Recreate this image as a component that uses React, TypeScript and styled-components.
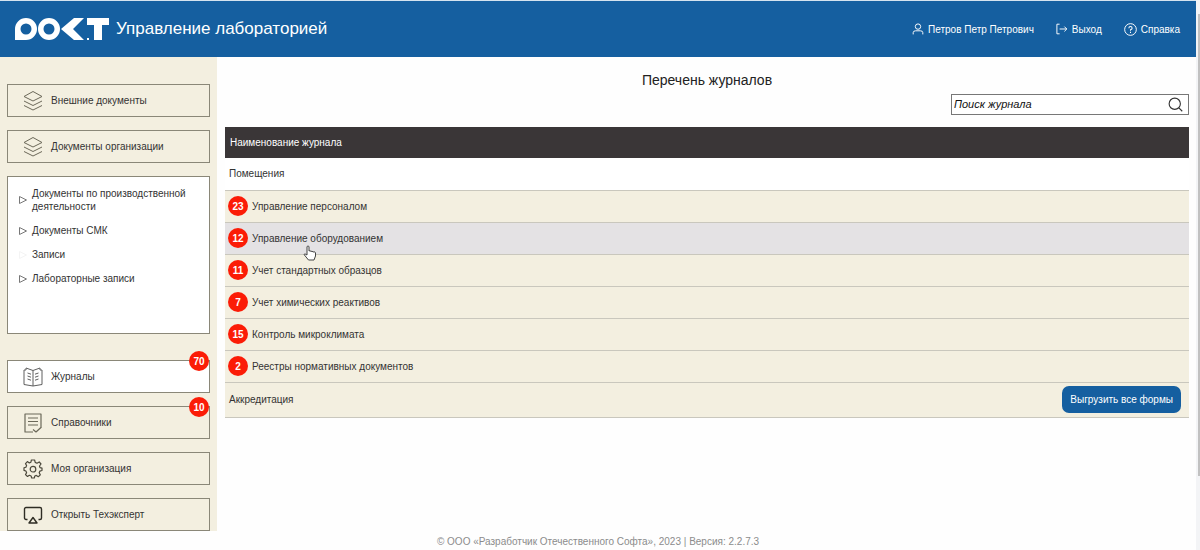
import React from "react";
import styled, { createGlobalStyle } from "styled-components";

const GlobalStyle = createGlobalStyle`
  *, *::before, *::after { box-sizing: border-box; }
  body {
    margin: 0;
    background: #fefefe;
    color: #333;
    font-family: "Liberation Sans", Arial, sans-serif;
    font-size: 10px;
    line-height: 13px;
  }
  button, input { font: inherit; color: inherit; }
  a { color: inherit; text-decoration: none; }
`;

const Page = styled.div`
  display: flex;
  min-height: 100vh;
`;

const Content = styled.div`
  flex: 1;
  min-width: 0;
  display: flex;
  flex-direction: column;
`;

const ScrollTrack = styled.div`
  width: 4px;
  padding: 14px 0 0 2px;
  background: #f3f4f6;
`;

const ScrollThumb = styled.div`
  height: 84vh;
  background: #c1c1c1;
`;

const Header = styled.header`
  display: flex;
  align-items: center;
  height: 57px;
  padding: 0 16px 0 14px;
  border-top: 1px solid #d5e3ef;
  background: #155fa0;
  color: #fff;
`;

const Brand = styled.a`
  display: flex;
  align-items: center;
  gap: 6px;
`;

const BrandName = styled.span`
  font-size: 17px;
  line-height: 20px;
`;

const UserNav = styled.nav`
  display: flex;
  gap: 22px;
  margin-left: auto;
`;

const UserLink = styled.a`
  display: flex;
  align-items: center;
  gap: 4px;
`;

const Columns = styled.div`
  display: flex;
  align-items: flex-start;
`;

const Sidebar = styled.aside`
  display: flex;
  flex-direction: column;
  gap: 26px;
  width: 217px;
  padding: 27px 7px 0;
  background: #f3efe0;
`;

const MenuGroup = styled.div`
  display: flex;
  flex-direction: column;
  gap: 13px;
`;

const MenuButton = styled.button<{ $active?: boolean }>`
  position: relative;
  display: flex;
  align-items: center;
  gap: 8px;
  height: 33px;
  padding: 0 15px;
  border: 1px solid #8a8778;
  background: ${(p) => (p.$active ? "#fff" : "transparent")};
  text-align: left;
`;

const Badge = styled.span`
  display: inline-flex;
  flex: none;
  align-items: center;
  justify-content: center;
  width: 20px;
  height: 20px;
  border-radius: 50%;
  background: #fb1c07;
  color: #fff;
  font-weight: bold;
`;

const CornerBadge = styled(Badge)`
  position: absolute;
  top: -10px;
  right: 0;
`;

const Tree = styled.ul`
  display: flex;
  flex-direction: column;
  gap: 11px;
  min-height: 158px;
  margin: 0;
  padding: 10px;
  border: 1px solid #8a8778;
  background: #fff;
  list-style: none;
`;

const TreeLink = styled.a`
  display: flex;
  align-items: center;
  gap: 4px;
`;

const TreeMark = styled.svg`
  flex: none;
`;

const Main = styled.main`
  flex: 1;
  min-width: 0;
  display: flex;
  flex-direction: column;
  padding: 13px 7px 0 8px;
`;

const Title = styled.h1`
  margin: 0;
  color: #222;
  font-size: 14px;
  font-weight: normal;
  line-height: 20px;
  text-align: center;
`;

const Search = styled.label`
  display: flex;
  align-items: center;
  align-self: flex-end;
  width: 238px;
  height: 21px;
  margin: 4px 0 12px;
  padding: 0 5px 0 2px;
  border: 1px solid #777;
  background: #fff;
`;

const SearchInput = styled.input`
  flex: 1;
  min-width: 0;
  padding: 0;
  border: 0;
  outline: 0;
  background: none;
  font-size: 11px;
  font-style: italic;
  &::placeholder { color: #111; opacity: 1; }
`;

const Table = styled.table`
  width: 100%;
  border-collapse: collapse;
`;

const HeadCell = styled.th`
  height: 31px;
  padding: 0 5px;
  background: #3a3637;
  color: #fff;
  font-weight: normal;
  text-align: left;
`;

const rowColors = { plain: "#fff", beige: "#f3efe0", hover: "#e4e2e4" };

const Row = styled.tr<{ $tone: keyof typeof rowColors }>`
  background: ${(p) => rowColors[p.$tone]};
`;

const Cell = styled.td<{ $tall?: boolean }>`
  height: ${(p) => (p.$tall ? 35 : 32)}px;
  padding: 0 8px 0 3px;
  border-bottom: 1px solid #c9c7bd;
`;

const CellBody = styled.div<{ $inset?: boolean }>`
  display: flex;
  align-items: center;
  gap: 4px;
  padding-left: ${(p) => (p.$inset ? 1 : 0)}px;
`;

const ExportButton = styled.button`
  height: 27px;
  margin-left: auto;
  padding: 0 8px;
  border: 0;
  border-radius: 7px;
  background: #155fa0;
  color: #fff;
`;

const Footer = styled.footer`
  margin-top: auto;
  padding-bottom: 2px;
  color: #8c8c8c;
  text-align: center;
`;

const Pointer = styled.svg`
  position: absolute;
  left: 303px;
  top: 245px;
  pointer-events: none;
`;

const Icon = ({ size = 20, children, color = "currentColor" }: { size?: number; color?: string; children: React.ReactNode }) => (
  <svg width={size} height={size} viewBox="0 0 20 20" fill="none" stroke={color} strokeWidth="1" strokeLinejoin="round" aria-hidden="true">
    {children}
  </svg>
);

const Logo = () => (
  <svg width="96" height="24" viewBox="0 0 96 24" aria-label="РОКТ">
    <path fill="#fff" fillRule="evenodd" d="M1 23V12A11 11 0 1 1 12 23ZM12 6.5a5.5 5.5 0 1 0 0 11a5.5 5.5 0 1 0 0-11Z" />
    <path fill="#fff" fillRule="evenodd" d="M35 1a11 11 0 1 1 0 22a11 11 0 1 1 0-22ZM35 6.500a5.500 5.500 0 1 0 0 11a5.500 5.500 0 1 0 0-11Z" />
    <path fill="#fff" d="M60 1H70L59 12L70 23H60L47 12Z" />
    <path fill="#fff" d="M73 21h2v2h-2ZM73 1H95V8H88V23H80V8H73Z" />
  </svg>
);

const LayersIcon = () => (
  <Icon color="#6b6859">
    <path d="M10 0.500L19 5.500L10 10L1 5.500ZM1 10L10 14.500L19 10M1 14.500L10 19L19 14.500" />
  </Icon>
);

const BookIcon = () => (
  <Icon color="#5f5f5f">
    <path d="M10 3.500L3 1V3H1V17.500L10 19L19 17.500V3H17V1L10 3.500V19M4.500 6L8 7.200M4.500 9L8 10.200M4.500 12L8 13.200M15.500 6L12 7.200M15.500 9L12 10.200M15.500 12L12 13.200" />
  </Icon>
);

const ListIcon = () => (
  <Icon color="#6b6859">
    <path strokeWidth="1.200" d="M10 19H2V1H18V14M5 5H15M5 8.500H15M5 12H15M10 16.500L13 19L18.500 14" />
  </Icon>
);

const GearIcon = () => (
  <Icon color="#4c493c">
    <path strokeWidth="1.200" d="M8.400 1H11.600L12.200 3.400L14 4.200L16.200 2.900L18 5L16.500 7L17 8.700L19 9.200V11.500L16.900 12.100L16.200 13.800L17.300 15.900L15.300 17.700L13.300 16.400L11.800 17L11.300 19H8.700L8.100 17L6.400 16.300L4.500 17.500L2.500 15.600L3.600 13.700L2.900 12L1 11.400V8.800L2.900 8.200L3.600 6.500L2.500 4.600L4.400 2.600L6.300 3.900L7.900 3.200Z" />
    <circle cx="10" cy="10.200" r="2.800" strokeWidth="1.200" />
  </Icon>
);

const ScreenIcon = () => (
  <Icon color="#2f2d24">
    <path strokeWidth="1.400" d="M4.500 14.500H3A1.500 1.500 0 0 1 1.500 13V4A1.500 1.500 0 0 1 3 2.500H17A1.500 1.500 0 0 1 18.500 4V13A1.500 1.500 0 0 1 17 14.500H15.500M10 12.500L14 18H6Z" />
  </Icon>
);

const Triangle = ({ faded }: { faded?: boolean }) => (
  <TreeMark width="10" height="10" viewBox="0 0 10 10" fill="none" stroke={faded ? "#f4f4f4" : "#777"} aria-hidden="true">
    <path d="M1.500 1.500L8.500 5L1.500 8.500Z" />
  </TreeMark>
);

const treeItems = [
  { label: "Документы по производственной деятельности" },
  { label: "Документы СМК" },
  { label: "Записи", leaf: true },
  { label: "Лабораторные записи" },
];

const journals: { name: string; count: number; tone: "beige" | "hover" }[] = [
  { name: "Управление персоналом", count: 23, tone: "beige" },
  { name: "Управление оборудованием", count: 12, tone: "hover" },
  { name: "Учет стандартных образцов", count: 11, tone: "beige" },
  { name: "Учет химических реактивов", count: 7, tone: "beige" },
  { name: "Контроль микроклимата", count: 15, tone: "beige" },
  { name: "Реестры нормативных документов", count: 2, tone: "beige" },
];

export default function App() {
  return (
    <Page>
      <GlobalStyle />
      <Content>
        <Header>
          <Brand href="#">
            <Logo />
            <BrandName>Управление лабораторией</BrandName>
          </Brand>
          <UserNav>
            <UserLink href="#">
              <Icon size={12}>
                <circle cx="10" cy="6" r="4.500" strokeWidth="1.600" />
                <path strokeWidth="1.600" d="M2 19V16Q2 13 6 13H14Q18 13 18 16V19" />
              </Icon>
              Петров Петр Петрович
            </UserLink>
            <UserLink href="#">
              <Icon size={12}>
                <path strokeWidth="1.600" d="M6 2H1.500V18H6M6 10H18M14 6L18 10L14 14" />
              </Icon>
              Выход
            </UserLink>
            <UserLink href="#">
              <Icon size={13}>
                <circle cx="10" cy="10" r="9" strokeWidth="1.500" />
                <path strokeWidth="1.600" d="M7.500 8Q7.500 5.500 10 5.500T12.500 8Q12.500 9.500 10 10.500V12M10 13.500V15.200" />
              </Icon>
              Справка
            </UserLink>
          </UserNav>
        </Header>
        <Columns>
          <Sidebar>
            <MenuGroup>
              <MenuButton><LayersIcon />Внешние документы</MenuButton>
              <MenuButton><LayersIcon />Документы организации</MenuButton>
              <Tree>
                {treeItems.map((item) => (
                  <li key={item.label}>
                    <TreeLink href="#">
                      <Triangle faded={item.leaf} />
                      <span>{item.label}</span>
                    </TreeLink>
                  </li>
                ))}
              </Tree>
            </MenuGroup>
            <MenuGroup>
              <MenuButton $active><BookIcon />Журналы<CornerBadge>70</CornerBadge></MenuButton>
              <MenuButton><ListIcon />Справочники<CornerBadge>10</CornerBadge></MenuButton>
              <MenuButton><GearIcon />Моя организация</MenuButton>
              <MenuButton><ScreenIcon />Открыть Техэксперт</MenuButton>
            </MenuGroup>
          </Sidebar>
          <Main>
            <Title>Перечень журналов</Title>
            <Search>
              <SearchInput type="text" placeholder="Поиск журнала" aria-label="Поиск журнала" />
              <Icon size={15} color="#333">
                <circle cx="9" cy="9" r="7.500" strokeWidth="1.500" />
                <path strokeWidth="1.500" d="M14.500 14.500L19 19" />
              </Icon>
            </Search>
            <Table>
              <thead>
                <tr><HeadCell scope="col">Наименование журнала</HeadCell></tr>
              </thead>
              <tbody>
                <Row $tone="plain">
                  <Cell><CellBody $inset>Помещения</CellBody></Cell>
                </Row>
                {journals.map((j) => (
                  <Row key={j.name} $tone={j.tone}>
                    <Cell><CellBody><Badge>{j.count}</Badge>{j.name}</CellBody></Cell>
                  </Row>
                ))}
                <Row $tone="beige">
                  <Cell $tall>
                    <CellBody $inset>
                      Аккредитация
                      <ExportButton>Выгрузить все формы</ExportButton>
                    </CellBody>
                  </Cell>
                </Row>
              </tbody>
            </Table>
          </Main>
        </Columns>
        <Footer>© ООО «Разработчик Отечественного Софта», 2023 | Версия: 2.2.7.3</Footer>
      </Content>
      <ScrollTrack><ScrollThumb /></ScrollTrack>
      <Pointer width="14" height="16" viewBox="0 0 14 16" fill="#fff" stroke="#444" strokeLinejoin="round" aria-hidden="true">
        <path d="M4 9V2Q4 1 5 1T6 2V6Q7 5 8 6.500Q9 5.500 10 7Q12 6 12.500 8V11L11 15H5.500L1 9.500Q1.500 8 4 10Z" />
      </Pointer>
    </Page>
  );
}
